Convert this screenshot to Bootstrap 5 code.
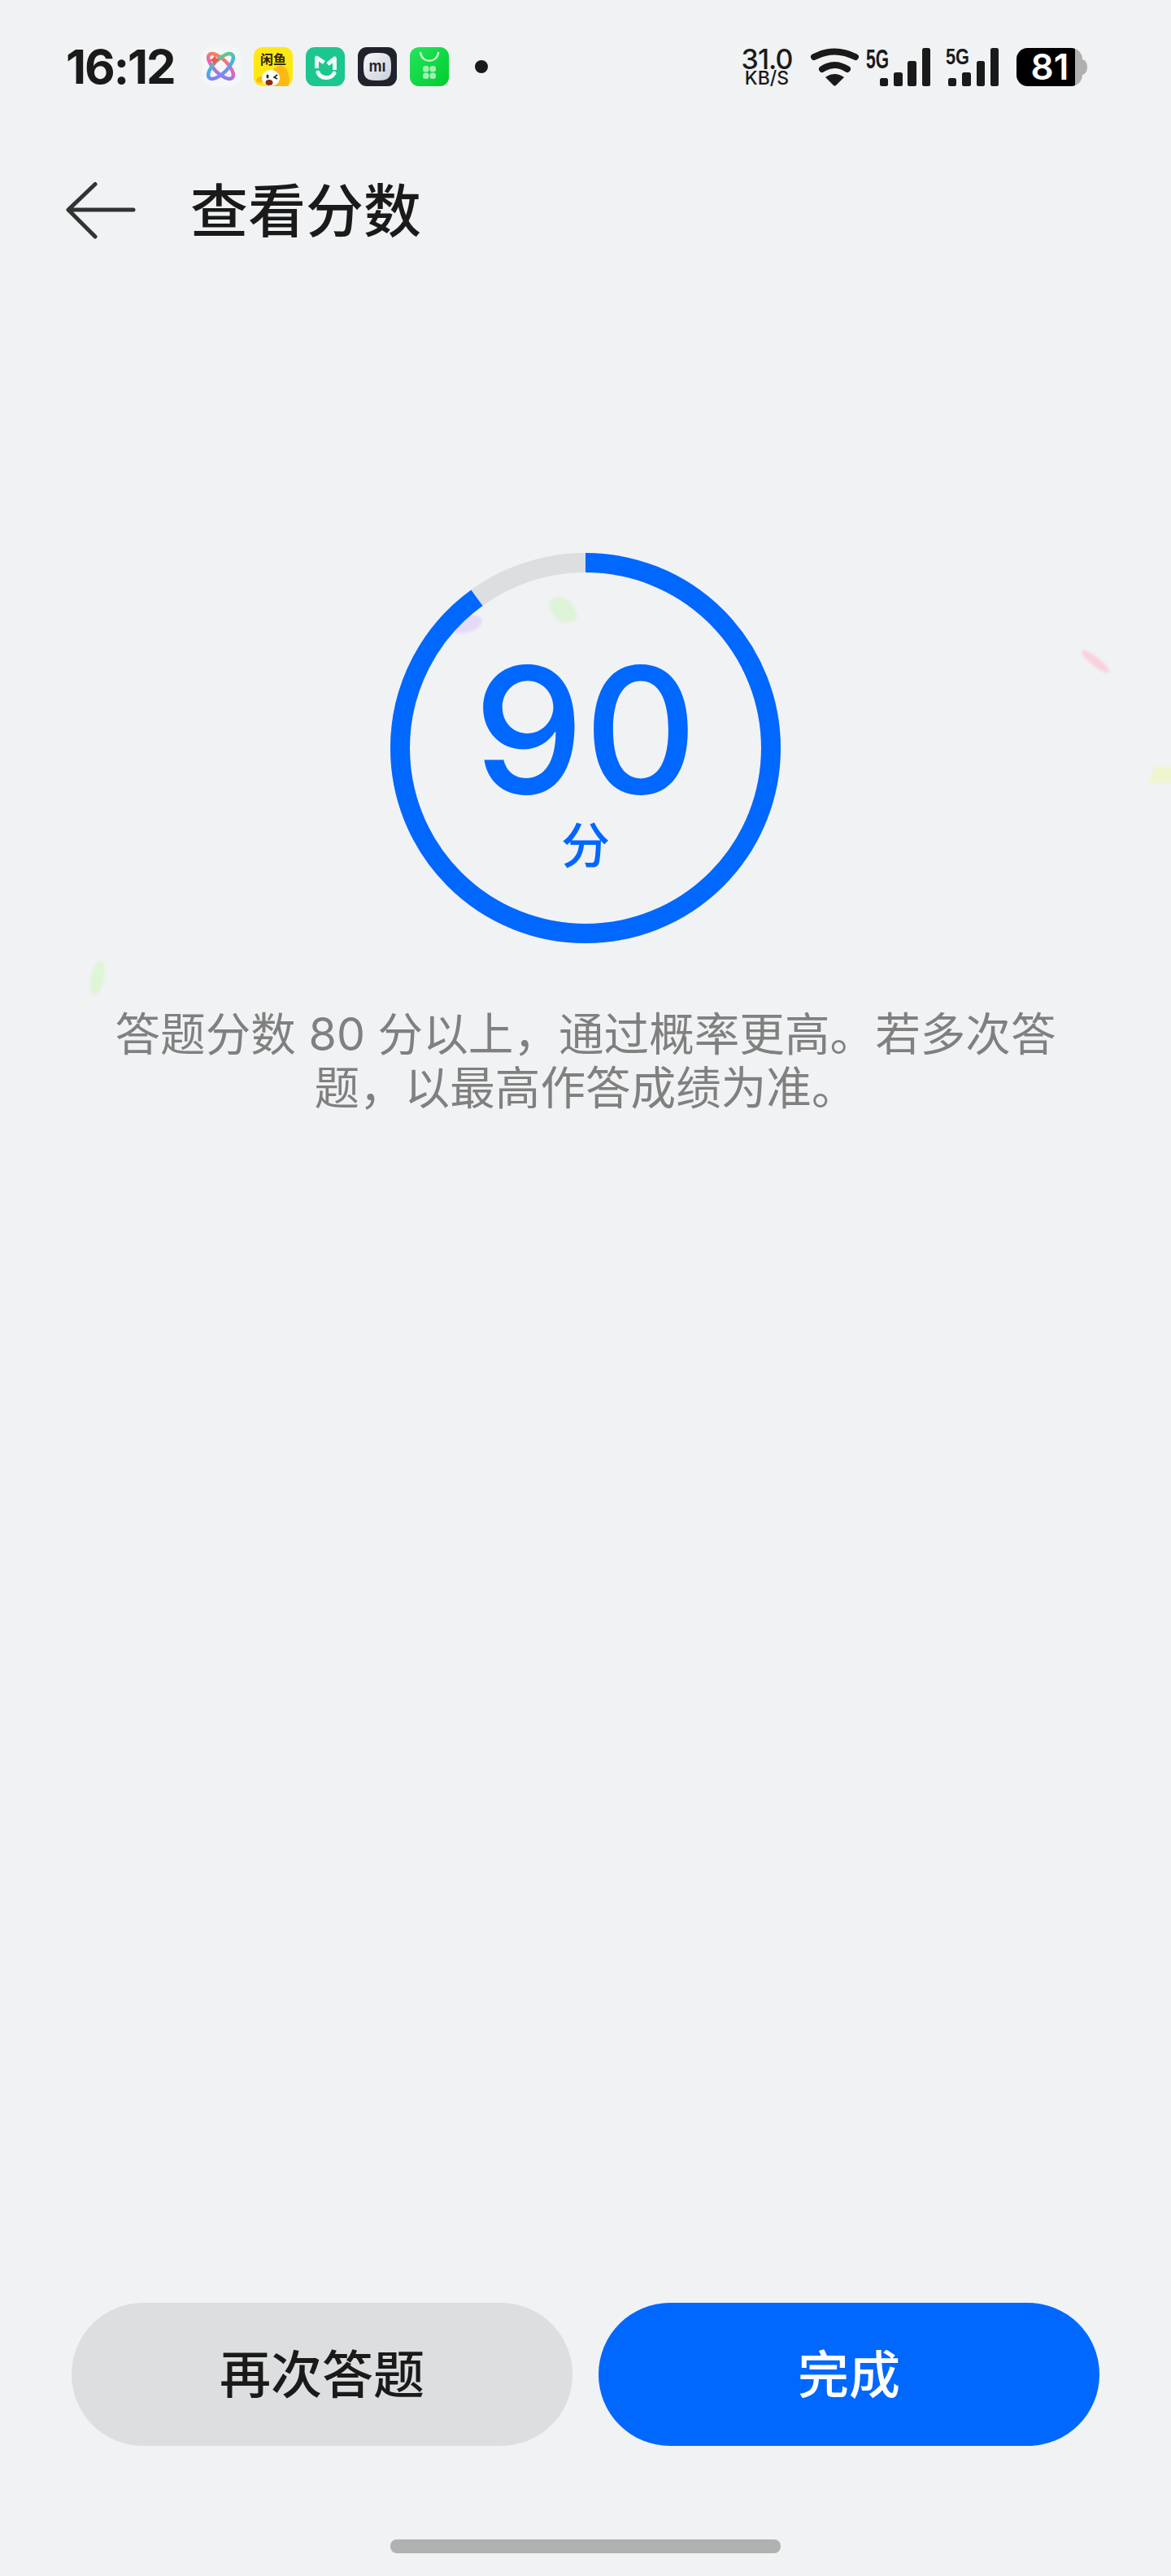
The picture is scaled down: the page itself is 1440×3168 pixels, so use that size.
<!DOCTYPE html>
<html lang="zh-CN">
<head>
    <meta charset="UTF-8">
    <meta name="viewport" content="width=device-width, initial-scale=1.0">
    <title>查看分数</title>
    <link href="https://cdn.jsdelivr.net/npm/bootstrap@5.3.0/dist/css/bootstrap.min.css" rel="stylesheet">
    <style>
        body {
            background: #f0f2f4;
            font-family: Inter, "Noto Sans CJK SC", sans-serif;
            color: #1a1a1a;
            overflow: hidden;
        }
        .phone-page { width: 1440px; height: 3168px; }
        svg { overflow: visible; }

        .status-row { height: 164px; padding: 0 103px 0 81px; }
        .clock { font-size: 58px; font-weight: 700; line-height: 1; letter-spacing: -2px; margin-right: 33px; }
        .app-icons { gap: 16px; }
        .app-icons svg { width: 48px; height: 48px; display: block; }
        .dot-more { width: 16px; height: 16px; border-radius: 50%; background: #1a1a1a; margin-left: 32px; }
        .speed-box { width: 70px; text-align: center; font-weight: 500; margin-right: 19px; }
        .speed-num { font-size: 34px; line-height: 27px; letter-spacing: -1px; }
        .speed-unit { font-size: 23px; line-height: 20px; }
        .wifi-icon { margin-right: 9px; }
        .sig-one { margin-right: 19px; }
        .sig-two { margin-right: 21px; }

        .title-row { height: 190px; padding-left: 80px; }
        .back-arrow { margin-right: 66px; }
        .page-title { font-size: 71px; font-weight: 500; line-height: 1; margin: 0; letter-spacing: 0; }

        .ring-box { display: grid; width: 480px; height: 480px; margin: 326px auto 0; position: relative; z-index: 1; }
        .ring-box > * { grid-area: 1 / 1; }
        .ring-text { color: #0067ff; padding-top: 108px; }
        .ring-score { font-size: 216px; font-weight: 500; line-height: 220px; }
        .ring-unit { font-size: 60px; font-weight: 500; line-height: 60px; margin-top: 2px; }

        .score-note { font-size: 55.6px; line-height: 66px; color: #808080; text-align: center; margin: 79px 136px 0; }

        .bottom-btns { gap: 32px; padding: 0 88px; margin-bottom: 115px; }
        .btn-pill-big { height: 176px; border-radius: 88px; border: 0; font-size: 63px; font-weight: 500; line-height: 1; width: 616px; }
        .btn-again, .btn-again:hover { background: #dcdee0; color: #1a1a1a; }
        .btn-done, .btn-done:hover { background: #0067ff; color: #fff; }
        .home-bar { width: 480px; height: 17px; border-radius: 8px; background: #b0b2b2; margin: 0 auto 28px; }

        .confetti { position: absolute; filter: blur(1.5px); }
        .conf-purple { left: 553px; top: 757px; width: 40px; height: 21px; border-radius: 50%; background: #e4daf8; transform: rotate(-14deg); }
        .conf-green { left: 678px; top: 733px; width: 28px; height: 34px; border-radius: 20% 60%; background: #def4d8; transform: rotate(-22deg); }
        .conf-lime { left: 112px; top: 1182px; width: 16px; height: 42px; border-radius: 50%; background: #def5d6; transform: rotate(12deg); }
        .conf-pink { left: 1326px; top: 808px; width: 42px; height: 11px; border-radius: 50%; background: #f8d3de; transform: rotate(38deg); }
        .conf-yellow { left: 1416px; top: 943px; width: 34px; height: 20px; background: #eff5cf; transform: skewX(-25deg); }
    </style>
</head>
<body>
    <div class="phone-page position-relative d-flex flex-column">
        <div class="status-row d-flex align-items-center justify-content-between">
            <div class="d-flex align-items-center">
                <span class="clock">16:12</span>
                <div class="app-icons d-flex">
                    <svg viewBox="0 0 48 48">
                        <defs>
                            <linearGradient id="ringA" x1="0" y1="0" x2="1" y2="1">
                                <stop offset="0" stop-color="#f78a45"/><stop offset=".55" stop-color="#e860c4"/><stop offset="1" stop-color="#5f8cf5"/>
                            </linearGradient>
                            <linearGradient id="ringB" x1="1" y1="0" x2="0" y2="1">
                                <stop offset="0" stop-color="#6fcf6a"/><stop offset=".5" stop-color="#3fb2ee"/><stop offset="1" stop-color="#a56cf2"/>
                            </linearGradient>
                        </defs>
                        <rect width="48" height="48" rx="11" fill="#f5f6f8"/>
                        <ellipse cx="23.500" cy="23.500" rx="20" ry="8.500" fill="none" stroke="url(#ringA)" stroke-width="4.500" transform="rotate(45 23.500 23.500)"/>
                        <ellipse cx="23.500" cy="23.500" rx="20" ry="8.500" fill="none" stroke="url(#ringB)" stroke-width="4.500" transform="rotate(-45 23.500 23.500)"/>
                        <path d="M16 9c1 4 3 6 7 7-4 1-6 3-7 7-1-4-3-6-7-7 4-1 6-3 7-7z" fill="#f4594e"/>
                    </svg>
                    <svg viewBox="0 0 48 48">
                        <rect width="48" height="48" rx="11" fill="#ffe812"/>
                        <text x="24" y="21" text-anchor="middle" font-family="'Noto Sans CJK SC',sans-serif" font-size="16" font-weight="700" fill="#2b2200" textLength="32" lengthAdjust="spacingAndGlyphs">闲鱼</text>
                        <path d="M20 48c-3-12 2-23 12-25 5-1 9 4 11 10 1 5 1 10 0 15z" fill="#fdb913"/>
                        <path d="M3 41c1-4 5-6 9-5v7c-4 1-8 1-9-2z" fill="#fdb913"/>
                        <ellipse cx="21" cy="38" rx="11" ry="10" fill="#fff"/>
                        <ellipse cx="17" cy="36" rx="1.500" ry="2.500" fill="#222"/>
                        <path d="M29 34l-4 3 4 2" fill="none" stroke="#222" stroke-width="1.600"/>
                        <ellipse cx="19" cy="43.500" rx="4.500" ry="3.500" fill="#8a2d10"/>
                    </svg>
                    <svg viewBox="0 0 48 48">
                        <rect width="48" height="48" rx="11" fill="#1cc68f"/>
                        <path d="M13.500 26V13l9 6M27 21l8.500-7v14" fill="none" stroke="#eefaf5" stroke-width="5" stroke-linejoin="round"/>
                        <path d="M15 31c3 8 16 9 20 1" fill="none" stroke="#eefaf5" stroke-width="5" stroke-linecap="round"/>
                    </svg>
                    <svg viewBox="0 0 48 48">
                        <defs>
                            <linearGradient id="miFace" x1="0" y1="0" x2="1" y2="1">
                                <stop offset="0" stop-color="#f7f8fa"/><stop offset="1" stop-color="#c8cfda"/>
                            </linearGradient>
                        </defs>
                        <rect width="48" height="48" rx="11" fill="#20232b"/>
                        <path d="M24 7c14 0 17 3 17 17s-3 17-17 17S7 38 7 24 10 7 24 7z" fill="url(#miFace)"/>
                        <text x="24" y="29.500" text-anchor="middle" font-family="'Liberation Sans',sans-serif" font-size="21" font-weight="700" fill="#23262d" textLength="21" lengthAdjust="spacingAndGlyphs">mı</text>
                    </svg>
                    <svg viewBox="0 0 48 48">
                        <defs>
                            <linearGradient id="storeBg" x1="0" y1="0" x2="1" y2="1">
                                <stop offset="0" stop-color="#26e45e"/><stop offset="1" stop-color="#00cc2e"/>
                            </linearGradient>
                        </defs>
                        <rect width="48" height="48" rx="11" fill="url(#storeBg)"/>
                        <path d="M13 7c2 13 20 13 22 0" fill="none" stroke="#c8f5d0" stroke-width="2.400" stroke-linecap="round"/>
                        <g fill="#a3f0b4">
                            <rect x="16" y="23" width="7.500" height="7.500" rx="3.200"/>
                            <rect x="24.500" y="23" width="7.500" height="7.500" rx="3.200"/>
                            <rect x="16" y="31.500" width="7.500" height="7.500" rx="3.200"/>
                            <rect x="24.500" y="31.500" width="7.500" height="7.500" rx="3.200"/>
                        </g>
                    </svg>
                </div>
                <span class="dot-more"></span>
            </div>
            <div class="d-flex align-items-center">
                <div class="speed-box">
                    <div class="speed-num">31.0</div>
                    <div class="speed-unit">KB/S</div>
                </div>
                <svg class="wifi-icon" width="59" height="47" viewBox="0 0 59 47">
                    <path d="M4 11Q29-2 55 11" fill="none" stroke="#1a1a1a" stroke-width="8" stroke-linecap="round"/>
                    <path d="M14 26Q29 16 45 26" fill="none" stroke="#1a1a1a" stroke-width="8" stroke-linecap="round"/>
                    <path d="M18 36Q29 28 41 36L31 46Q29 47 28 46Z" fill="#1a1a1a"/>
                </svg>
                <svg class="sig-one" width="79" height="47" viewBox="0 0 79 47">
                    <text x="0" y="25" font-family="'Liberation Sans',sans-serif" font-size="34" font-weight="700" fill="#1a1a1a" textLength="28" lengthAdjust="spacingAndGlyphs">5G</text>
                    <g fill="#1a1a1a">
                        <rect x="17" y="37" width="10" height="10" rx="2.500"/>
                        <rect x="34" y="30" width="11" height="17" rx="2.500"/>
                        <rect x="51" y="16" width="11" height="31" rx="2.500"/>
                        <rect x="69" y="0" width="10" height="47" rx="2.500"/>
                    </g>
                </svg>
                <svg class="sig-two" width="66" height="47" viewBox="0 0 66 47">
                    <text x="0" y="20" font-family="'Liberation Sans',sans-serif" font-size="28" font-weight="700" fill="#1a1a1a" textLength="29" lengthAdjust="spacingAndGlyphs">5G</text>
                    <g fill="#1a1a1a">
                        <rect x="3" y="37" width="10" height="10" rx="2.500"/>
                        <rect x="20" y="30" width="11" height="17" rx="2.500"/>
                        <rect x="38" y="16" width="10" height="31" rx="2.500"/>
                        <rect x="55" y="0" width="10" height="47" rx="2.500"/>
                    </g>
                </svg>
                <svg width="87" height="47" viewBox="0 0 87 47">
                    <defs><clipPath id="batFill"><rect width="72" height="47"/></clipPath></defs>
                    <path d="M81 14c4 1 6 5 6 9.500s-2 8.500-6 9.500z" fill="#b0b0b0"/>
                    <rect width="81" height="47" rx="14" fill="#b0b0b0"/>
                    <rect width="81" height="47" rx="14" fill="#000" clip-path="url(#batFill)"/>
                    <text x="41" y="39" text-anchor="middle" font-family="Inter,sans-serif" font-size="44" font-weight="600" fill="#fff">81</text>
                </svg>
            </div>
        </div>

        <div class="title-row d-flex align-items-center">
            <svg class="back-arrow" width="88" height="72" viewBox="0 0 88 72">
                <path d="M37 3.500L4 35l33 33M4 35h80" fill="none" stroke="#333" stroke-width="5" stroke-linecap="round" stroke-linejoin="round"/>
            </svg>
            <h1 class="page-title">查看分数</h1>
        </div>

        <div class="ring-box">
            <svg width="480" height="480" viewBox="0 0 480 480">
                <circle cx="240" cy="240" r="228" fill="none" stroke="#dcdee0" stroke-width="24"/>
                <circle cx="240" cy="240" r="228" fill="none" stroke="#0067ff" stroke-width="24" stroke-dasharray="1289.3 1432.6" transform="rotate(-90 240 240)"/>
            </svg>
            <div class="ring-text d-flex flex-column align-items-center">
                <div class="ring-score">90</div>
                <div class="ring-unit">分</div>
            </div>
        </div>

        <p class="score-note">答题分数 80 分以上，通过概率更高。若多次答题，以最高作答成绩为准。</p>

        <div class="bottom-btns d-flex mt-auto">
            <button type="button" class="btn btn-pill-big btn-again">再次答题</button>
            <button type="button" class="btn btn-pill-big btn-done">完成</button>
        </div>
        <div class="home-bar"></div>

        <div class="confetti conf-purple"></div>
        <div class="confetti conf-green"></div>
        <div class="confetti conf-lime"></div>
        <div class="confetti conf-pink"></div>
        <div class="confetti conf-yellow"></div>
    </div>
    <script src="https://cdn.jsdelivr.net/npm/bootstrap@5.3.0/dist/js/bootstrap.bundle.min.js"></script>
</body>
</html>
